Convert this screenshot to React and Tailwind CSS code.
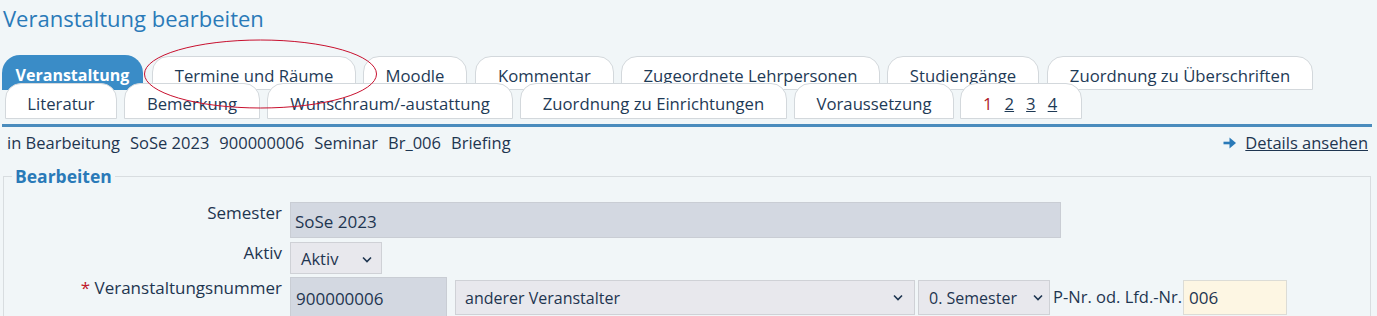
import React from "react";

const Chevron = () => (
  <svg width="12" height="8" viewBox="0 0 12 8" className="shrink-0">
    <path d="M2 1.5 L6 5.5 L10 1.5" fill="none" stroke="#1e3550" strokeWidth="1.6" />
  </svg>
);

export default function App() {
  const row1 = [
    ["Termine und Räume", 204, 9],
    ["Moodle", 104, 7],
    ["Kommentar", 139, 8],
    ["Zugeordnete Lehrpersonen", 259, 7],
    ["Studiengänge", 152, 7],
    ["Zuordnung zu Überschriften", 266, 8],
  ];
  const row2 = [
    ["Literatur", 112, 0],
    ["Bemerkung", 136, 7],
    ["Wunschraum/-austattung", 246, 7],
    ["Zuordnung zu Einrichtungen", 267, 7],
    ["Voraussetzung", 160, 7],
  ];
  return (
    <div
      className="relative w-[1377px] h-[316px] overflow-hidden bg-[#f1f6f8] text-[#1e3550]"
      style={{ fontFamily: '"Open Sans", "Noto Sans", sans-serif' }}
    >
      <div className="pl-[3px] pt-[3px] text-[22px] leading-[30px] text-[#2a7ab8]">
        Veranstaltung bearbeiten
      </div>

      {/* tabs */}
      <div className="mt-[22px] pl-[2px] text-[16.7px]">
        <div className="flex">
          <div className="w-[141px] h-[35px] shrink-0 rounded-t-[18px] bg-[#3a8cc7] text-white font-bold text-[16px] flex justify-center pt-[9px] leading-[22px]">
            Veranstaltung
          </div>
          {row1.map(([t, w, m]) => (
            <div
              key={t}
              className="shrink-0 h-[34px] mt-[1px] rounded-t-[16px] border border-[#d3d8dc] bg-white flex justify-center pt-[8px] leading-[22px] text-[#1e3a56]"
              style={{ width: w, marginLeft: m }}
            >
              {t}
            </div>
          ))}
        </div>
        <div className="relative z-10 -mt-[7px] pl-[3px] flex">
          {row2.map(([t, w, m]) => (
            <div
              key={t}
              className="shrink-0 h-[36px] rounded-t-[16px] border border-[#d3d8dc] bg-white flex justify-center pt-[9px] leading-[22px] text-[#1e3a56]"
              style={{ width: w, marginLeft: m }}
            >
              {t}
            </div>
          ))}
          <div className="shrink-0 w-[122px] ml-[6px] h-[36px] rounded-t-[16px] border border-[#d3d8dc] bg-white flex justify-start gap-[12px] pl-[22px] pt-[9px] leading-[22px]">
            <span className="text-[#b0182a]">1</span>
            <span className="underline text-[#1e3a56]">2</span>
            <span className="underline text-[#1e3a56]">3</span>
            <span className="underline text-[#1e3a56]">4</span>
          </div>
        </div>
      </div>
      <div className="ml-[2px] w-[1370px] h-[3px] bg-[#4a8cbd] mt-[5px]" />

      {/* info line */}
      <div className="flex justify-between items-center pl-[7px] pr-[9px] mt-[5px] text-[16.5px] leading-[22px]">
        <div className="flex gap-[10px]">
          <span>in Bearbeitung</span>
          <span>SoSe 2023</span>
          <span>900000006</span>
          <span>Seminar</span>
          <span>Br_006</span>
          <span>Briefing</span>
        </div>
        <div className="flex items-center gap-[8px]">
          <svg width="14" height="12" viewBox="0 0 14 12">
            <path d="M0.5 6 H8" stroke="#2a7ab8" strokeWidth="2.6" />
            <path d="M6.5 0.5 L13 6 L6.5 11.5 Z" fill="#2a7ab8" />
          </svg>
          <span className="underline">Details ansehen</span>
        </div>
      </div>

      {/* fieldset */}
      <fieldset className="ml-[3px] w-[1368px] mt-[11px] border border-[#d8dde0] pl-[8px] pr-[8px] pb-[20px]">
        <legend className="px-[3px] text-[17.5px] font-bold text-[#2a7ab8] leading-[22px]">
          Bearbeiten
        </legend>
        <div className="flex flex-col mt-[15px] text-[17px]">
          <div className="flex gap-[8px]">
            <div className="w-[270px] text-right leading-[22px] pt-[0px] shrink-0">Semester</div>
            <div className="w-[771px] h-[36px] bg-[#d3d8e1] border border-[#c9cdd4] px-[4px] flex items-center pt-[3px]">
              SoSe 2023
            </div>
          </div>
          <div className="flex gap-[8px] mt-[4px]">
            <div className="w-[270px] text-right leading-[22px] pt-[0px] shrink-0">Aktiv</div>
            <div className="w-[92px] h-[32px] bg-[#e8e8ed] border border-[#cfd1d6] pl-[10px] pr-[8px] flex items-center justify-between pt-[3px] text-[16.5px]">
              <span>Aktiv</span>
              <Chevron />
            </div>
          </div>
          <div className="flex gap-[8px] mt-[3px] items-start">
            <div className="w-[270px] text-right leading-[22px] pt-[0px] shrink-0">
              <span className="text-[#c0182a]">*</span> Veranstaltungsnummer
            </div>
            <div className="w-[157px] h-[40px] bg-[#d3d8e1] border border-[#c9cdd4] px-[5px] flex items-center pt-[4px] shrink-0">
              900000006
            </div>
            <div className="w-[460px] h-[35px] mt-[3px] bg-[#e8e8ed] border border-[#cfd1d6] pl-[9px] pr-[10px] flex items-center justify-between shrink-0 text-[16px]">
              <span>anderer Veranstalter</span>
              <Chevron />
            </div>
            <div className="w-[132px] h-[35px] mt-[3px] -ml-[5px] bg-[#e8e8ed] border border-[#cfd1d6] pl-[10px] pr-[5px] flex items-center justify-between shrink-0 text-[16px]">
              <span>0. Semester</span>
              <Chevron />
            </div>
            <div className="mt-[3px] h-[35px] flex items-center -ml-[5px] shrink-0 text-[16.5px]">P-Nr. od. Lfd.-Nr.</div>
            <div className="w-[104px] h-[35px] mt-[3px] -ml-[7px] bg-[#fdf6e3] border border-[#dcdcd6] px-[5px] flex items-center shrink-0 text-[17px]">
              006
            </div>
          </div>
        </div>
      </fieldset>

      {/* annotation ellipse */}
      <svg className="absolute left-0 top-0 z-20 pointer-events-none" width="1377" height="316">
        <ellipse cx="260.5" cy="74" rx="116" ry="34" fill="none" stroke="#c8102e" strokeWidth="1" />
      </svg>
    </div>
  );
}
